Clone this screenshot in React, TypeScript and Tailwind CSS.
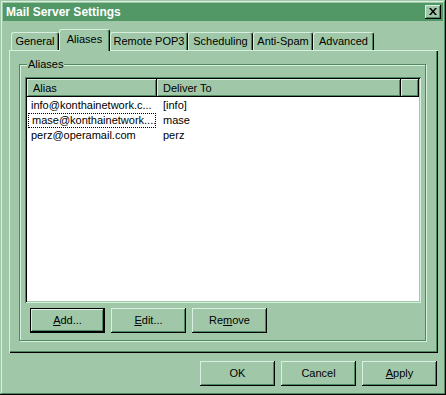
import React from "react";

const FONT = { fontFamily: '"Liberation Sans", Arial, sans-serif' };

const RAISED =
  "shadow-[inset_-1px_-1px_#000,inset_1px_1px_#d8f0e0,inset_-2px_-2px_#508860]";

function Btn({
  children,
  def,
  w = "w-[75px]",
}: {
  children: React.ReactNode;
  def?: boolean;
  w?: string;
}) {
  if (def) {
    return (
      <div className={`${w} h-[25px] border border-black bg-[#a0c8a8]`}>
        <div
          className={`w-full h-full flex items-center justify-center text-[11px] text-black ${RAISED}`}
        >
          {children}
        </div>
      </div>
    );
  }
  return (
    <div
      className={`${w} h-[25px] bg-[#a0c8a8] flex items-center justify-center text-[11px] text-black ${RAISED}`}
    >
      {children}
    </div>
  );
}

function Tab({
  label,
  w,
  selected,
}: {
  label: string;
  w: string;
  selected?: boolean;
}) {
  if (selected) {
    return (
      <div
        className={`${w} h-[22px] -mb-[1px] relative z-10 bg-[#a0c8a8] border-l border-t border-[#d8f0e0] rounded-tl-[3px] rounded-tr-[3px] border-r border-r-black flex items-center justify-center text-[11px] text-black pb-[2px] shadow-[inset_-1px_0_#508860]`}
      >
        {label}
      </div>
    );
  }
  return (
    <div
      className={`${w} h-[18px] bg-[#a0c8a8] border-l border-t border-[#d8f0e0] rounded-tl-[3px] rounded-tr-[3px] border-r border-r-black flex items-center justify-center text-[11px] text-black shadow-[inset_-1px_0_#508860]`}
    >
      {label}
    </div>
  );
}

const rows = [
  { alias: "info@konthainetwork.c...", to: "[info]" },
  { alias: "mase@konthainetwork....", to: "mase", focus: true },
  { alias: "perz@operamail.com", to: "perz" },
];

export default function App() {
  return (
    <div
      style={FONT}
      className="w-[446px] h-[395px] bg-[#a0c8a8] p-[3px] shadow-[inset_-1px_-1px_#000,inset_1px_1px_#a0c8a8,inset_-2px_-2px_#508860,inset_2px_2px_#d8f0e0] overflow-hidden"
    >
      {/* Title bar */}
      <div className="h-[18px] bg-[#519866] flex items-center justify-between pl-[3px] pr-[2px]">
        <span className="text-white font-bold text-[12px] leading-none">
          Mail Server Settings
        </span>
        <div
          className={`w-[16px] h-[14px] bg-[#a0c8a8] flex items-center justify-center ${RAISED}`}
        >
          <svg width="8" height="7" viewBox="0 0 8 7" className="-mt-[1px]">
            <path d="M0 0h2l2 2.5L6 0h2L5 3.5 8 7H6L4 4.5 2 7H0l3-3.5z" fill="#000" />
          </svg>
        </div>
      </div>

      {/* Tabs + panel */}
      <div className="ml-[6px] mt-[8px] w-[429px]">
        <div className="flex items-end h-[21px] pl-[2px]">
          <Tab label="General" w="w-[48px]" />
          <Tab label="Aliases" w="w-[51px]" selected />
          <Tab label="Remote POP3" w="w-[78px]" />
          <Tab label="Scheduling" w="w-[65px]" />
          <Tab label="Anti-Spam" w="w-[60px]" />
          <Tab label="Advanced" w="w-[61px]" />
        </div>
        <div className="h-[303px] bg-[#a0c8a8] shadow-[inset_1px_1px_#d8f0e0,inset_-1px_-1px_#000,inset_-2px_-2px_#508860] pt-[14px] pl-[10px]">
          {/* Group box */}
          <div className="relative w-[407px] h-[277px] border border-[#508860] shadow-[inset_1px_1px_#d8f0e0,1px_1px_#d8f0e0] pt-[12px] pl-[5px]">
            <span className="absolute -top-[7px] left-[7px] px-[1px] bg-[#a0c8a8] text-[11px] leading-[13px] text-black">
              Aliases
            </span>
            {/* List view */}
            <div className="w-[396px] h-[226px] p-[2px] bg-[#a0c8a8] shadow-[inset_1px_1px_#508860,inset_-1px_-1px_#d8f0e0,inset_2px_2px_#000]">
              <div className="w-full h-full bg-white flex flex-col">
                <div className="flex h-[18px] bg-[#a0c8a8] text-[11px] text-black">
                  <div className={`w-[130px] h-full flex items-center pl-[6px] ${RAISED}`}>
                    Alias
                  </div>
                  <div className={`w-[244px] h-full flex items-center pl-[6px] ${RAISED}`}>
                    Deliver To
                  </div>
                  <div className={`flex-1 h-full ${RAISED}`} />
                </div>
                <div className="h-[1px]" />
                {rows.map((r) => (
                  <div key={r.alias} className="flex h-[15px] text-[11px] text-black">
                    <div className="w-[130px] h-full pl-[1px]">
                      <div
                        className={`w-[128px] h-full flex items-center pl-[3px] ${
                          r.focus ? "border border-dotted border-black pl-[2px]" : ""
                        }`}
                      >
                        {r.alias}
                      </div>
                    </div>
                    <div className="flex items-center pl-[6px]">{r.to}</div>
                  </div>
                ))}
              </div>
            </div>
            <div className="flex gap-[6px] mt-[5px] pl-[5px]">
              <Btn def>
                <span>
                  <u>A</u>dd...
                </span>
              </Btn>
              <Btn>
                <span>
                  <u>E</u>dit...
                </span>
              </Btn>
              <Btn>
                <span>
                  Re<u>m</u>ove
                </span>
              </Btn>
            </div>
          </div>
        </div>
        {/* Bottom buttons */}
        <div className="flex justify-end gap-[6px] mt-[8px] pr-[1px]">
          <Btn>OK</Btn>
          <Btn>Cancel</Btn>
          <Btn>
            <span>
              <u>A</u>pply
            </span>
          </Btn>
        </div>
      </div>
    </div>
  );
}
